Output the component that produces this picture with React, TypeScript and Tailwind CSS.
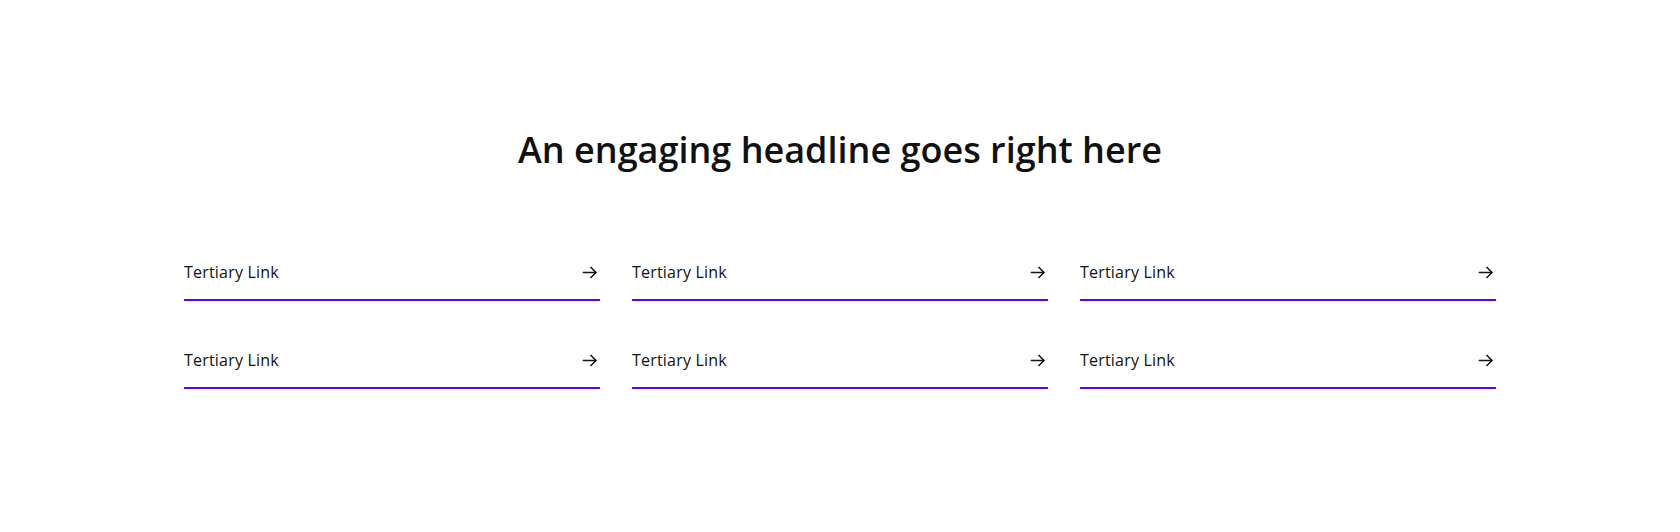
const LINKS = Array.from({ length: 6 }, () => 'Tertiary Link');

function ArrowIcon() {
  return (
    <svg width="20" height="20" viewBox="0 0 20 20" fill="none" className="shrink-0">
      <path
        d="M3.5 10.5H16M11 5.5L16 10.5L11 15.5"
        stroke="#161616"
        strokeWidth="1.5"
        strokeLinecap="square"
      />
    </svg>
  );
}

function TertiaryLink({ label }: { label: string }) {
  return (
    <a
      href="#"
      className="flex items-center justify-between h-[56px] border-b-2 border-[#6200ee] text-[16px] leading-[24px] tracking-[0.2px] font-medium text-[#111111]"
    >
      <span>{label}</span>
      <ArrowIcon />
    </a>
  );
}

export default function App() {
  return (
    <div className="min-h-[532px] bg-white font-['Open_Sans',sans-serif]">
      <div className="pt-[128px] w-[1312px] mx-auto">
        <h1 className="text-center text-[36px] leading-[44px] font-semibold text-[#111111]">
          An engaging headline goes right here
        </h1>
        <div className="mt-[73px] grid grid-cols-3 gap-x-8 gap-y-8">
          {LINKS.map((label, i) => (
            <TertiaryLink key={i} label={label} />
          ))}
        </div>
      </div>
    </div>
  );
}
